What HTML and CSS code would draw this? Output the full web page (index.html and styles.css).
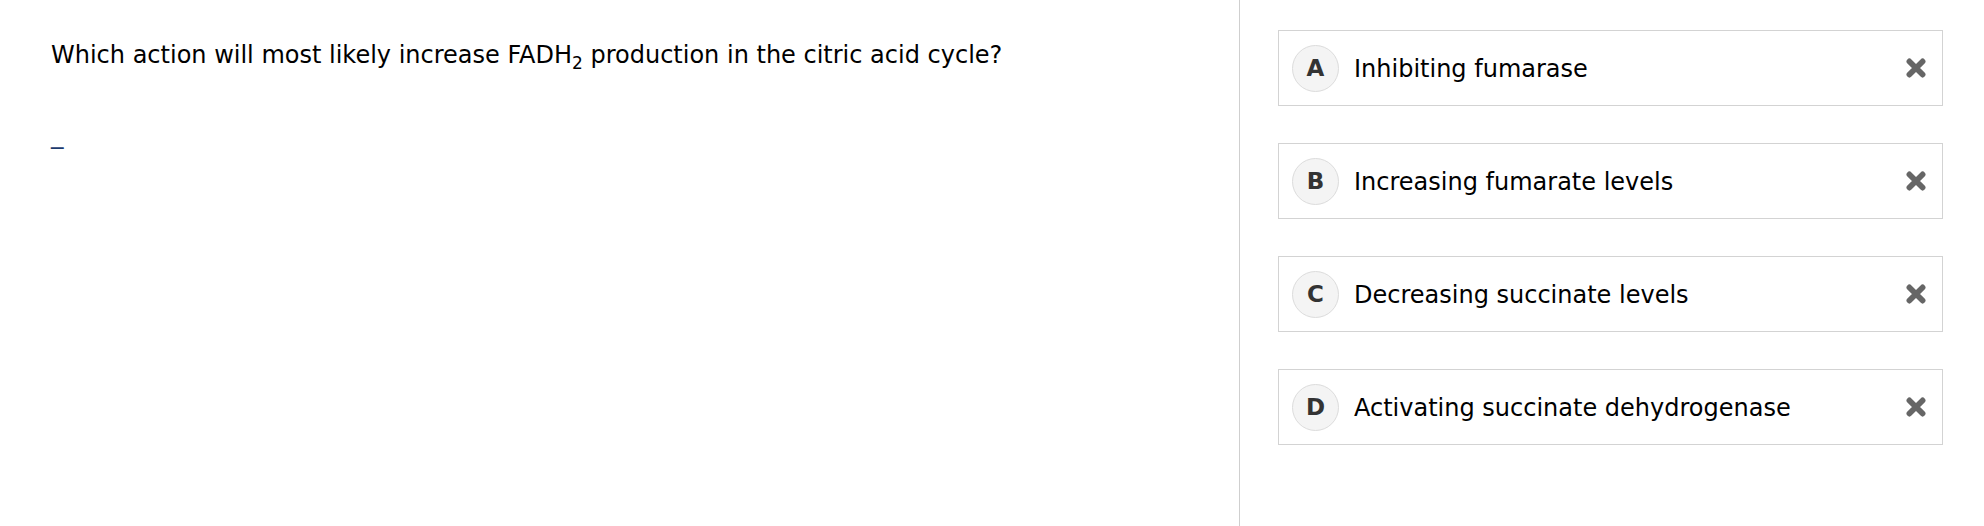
FILE: index.html
```html
<!DOCTYPE html>
<html>
<head>
<meta charset="utf-8">
<link rel="stylesheet" href="styles.css">
</head>
<body>
<div class="page">
  <div class="stem">
    <p class="question">Which action will most likely increase FADH<sub>2</sub> production in the citric acid cycle?</p>
    <p class="blank">_</p>
  </div>
  <div class="answers">
    <div class="option">
      <span class="letter">A</span>
      <span class="label">Inhibiting fumarase</span>
      <svg class="cross" viewBox="0 0 20 20"><path d="M4 4 L16 16 M16 4 L4 16" stroke="#666" stroke-width="5.2" stroke-linecap="round"/></svg>
    </div>
    <div class="option">
      <span class="letter">B</span>
      <span class="label">Increasing fumarate levels</span>
      <svg class="cross" viewBox="0 0 20 20"><path d="M4 4 L16 16 M16 4 L4 16" stroke="#666" stroke-width="5.2" stroke-linecap="round"/></svg>
    </div>
    <div class="option">
      <span class="letter">C</span>
      <span class="label">Decreasing succinate levels</span>
      <svg class="cross" viewBox="0 0 20 20"><path d="M4 4 L16 16 M16 4 L4 16" stroke="#666" stroke-width="5.2" stroke-linecap="round"/></svg>
    </div>
    <div class="option">
      <span class="letter">D</span>
      <span class="label">Activating succinate dehydrogenase</span>
      <svg class="cross" viewBox="0 0 20 20"><path d="M4 4 L16 16 M16 4 L4 16" stroke="#666" stroke-width="5.2" stroke-linecap="round"/></svg>
    </div>
  </div>
</div>
</body>
</html>
```

FILE: styles.css
```css
html, body {
  margin: 0;
  padding: 0;
  background: #fff;
}
body {
  font-family: "DejaVu Sans", Verdana, sans-serif;
  color: #000;
}
.page {
  display: flex;
  height: 526px;
}
.stem {
  width: 1240px;
  box-sizing: border-box;
  border-right: 1px solid #cfcfcf;
  padding: 39px 0 0 51px;
}
.question {
  margin: 0;
  font-size: 24px;
  line-height: 32px;
}
.question sub {
  font-size: 17px;
  line-height: 0;
}
.blank {
  margin: 48px 0 0 0;
  font-size: 25px;
  line-height: 32px;
  color: #1c3b6e;
}
.answers {
  flex: 1;
  padding: 30px 41px 0 38px;
  display: flex;
  flex-direction: column;
  gap: 37px;
}
.option {
  height: 76px;
  box-sizing: border-box;
  border: 1px solid #d3d3d3;
  display: flex;
  align-items: center;
  padding: 0 15px 0 13px;
}
.letter {
  width: 47px;
  height: 47px;
  box-sizing: border-box;
  border: 1px solid #dcdcdc;
  border-radius: 50%;
  background: #f4f4f4;
  display: flex;
  align-items: center;
  justify-content: center;
  font-weight: bold;
  font-size: 23px;
  color: #333;
}
.label {
  flex: 1;
  margin-left: 15px;
  font-size: 24px;
  padding-top: 2px;
}
.cross {
  width: 22px;
  height: 22px;
}
```
